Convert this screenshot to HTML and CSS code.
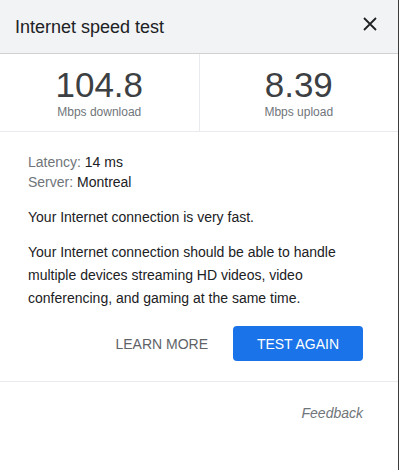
FILE: index.html
```html
<!DOCTYPE html>
<html>
<head>
<meta charset="utf-8">
<link rel="stylesheet" href="styles.css">
</head>
<body>
<div class="card">
  <div class="header">
    <div class="title">Internet speed test</div>
    <svg class="close" width="16" height="16" viewBox="0 0 16 16"><path d="M2 2L14 14M14 2L2 14" stroke="#202124" stroke-width="1.8" fill="none"/></svg>
  </div>
  <div class="stats">
    <div class="stat">
      <div class="num">104.8</div>
      <div class="unit">Mbps download</div>
    </div>
    <div class="stat">
      <div class="num">8.39</div>
      <div class="unit">Mbps upload</div>
    </div>
  </div>
  <div class="body">
    <div class="meta">
      <div><span class="label">Latency:</span> 14 ms</div>
      <div><span class="label">Server:</span> Montreal</div>
    </div>
    <p class="fast">Your Internet connection is very fast.</p>
    <p class="desc">Your Internet connection should be able to handle multiple devices streaming HD videos, video conferencing, and gaming at the same time.</p>
    <div class="actions">
      <span class="learn">LEARN MORE</span>
      <span class="again">TEST AGAIN</span>
    </div>
  </div>
  <div class="footer">
    <span class="feedback">Feedback</span>
  </div>
</div>
</body>
</html>
```
FILE: styles.css
```css
html, body {
  margin: 0;
  padding: 0;
  background: #fff;
}
body {
  font-family: "Liberation Sans", Arial, sans-serif;
  color: #202124;
}
.card {
  width: 398px;
  height: 470px;
  border-right: 1px solid #3c3c3c;
  box-sizing: content-box;
}
.header {
  height: 53px;
  background: #f1f3f4;
  border-bottom: 1px solid #cfd1d3;
  display: flex;
  align-items: center;
  justify-content: space-between;
  padding: 0 20px 0 15px;
}
.title {
  font-size: 18px;
  color: #202124;
  margin-top: 2px;
}
.close {
  margin-top: -6px;
}
.stats {
  display: flex;
  height: 77px;
  border-bottom: 1px solid #e8eaed;
}
.stat {
  flex: 1;
  display: flex;
  flex-direction: column;
  align-items: center;
  padding-top: 11px;
}
.stat + .stat {
  border-left: 1px solid #e8eaed;
}
.num {
  font-size: 35px;
  line-height: 40px;
  color: #3c4043;
}
.unit {
  font-size: 12px;
  line-height: 14px;
  color: #70757a;
}
.body {
  padding: 20px 35px 20px 28px;
  font-size: 14px;
  border-bottom: 1px solid #e8eaed;
}
.meta {
  line-height: 20px;
}
.label {
  color: #70757a;
}
.body p {
  margin: 0;
}
.fast {
  margin-top: 15px !important;
  line-height: 20px;
}
.desc {
  margin-top: 14px !important;
  line-height: 23px;
}
.actions {
  display: flex;
  justify-content: flex-end;
  align-items: center;
  gap: 25px;
  margin-top: 16px;
}
.learn {
  color: #5f6368;
  font-size: 14px;
}
.again {
  background: #1a73e8;
  color: #fff;
  font-size: 14px;
  width: 130px;
  height: 35px;
  border-radius: 4px;
  display: flex;
  align-items: center;
  justify-content: center;
}
.footer {
  display: flex;
  justify-content: flex-end;
  padding: 23px 35px 0 0;
}
.feedback {
  font-style: italic;
  color: #70757a;
  font-size: 14px;
}
```
